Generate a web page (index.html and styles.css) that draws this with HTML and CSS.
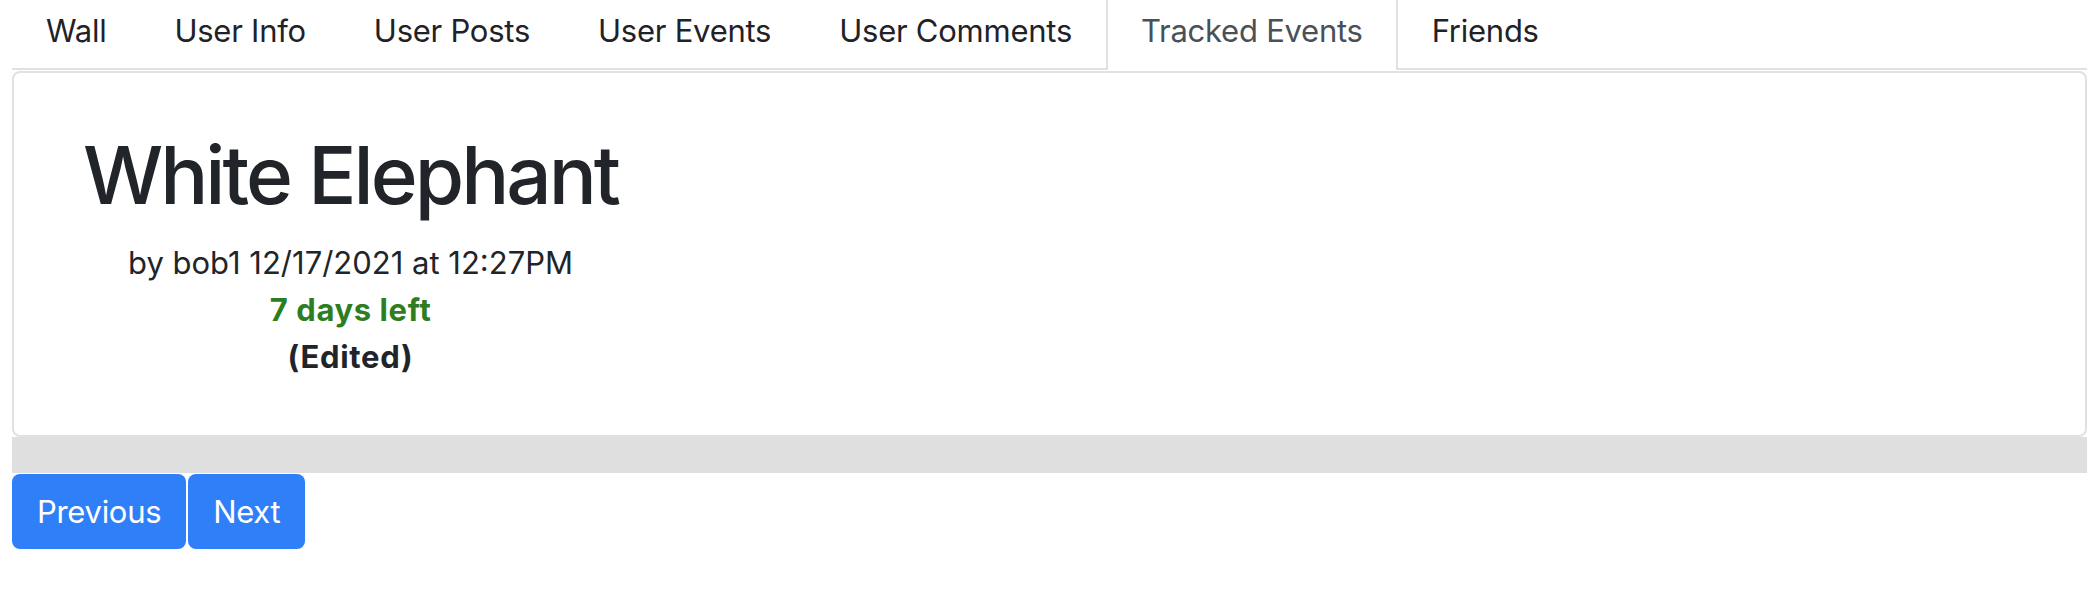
FILE: index.html
```html
<!DOCTYPE html>
<html lang="en">
<head>
<meta charset="utf-8">
<title>Tracked Events</title>
<link rel="stylesheet" href="styles.css">
</head>
<body>
  <ul class="tabs">
    <li class="tab">Wall</li>
    <li class="tab">User Info</li>
    <li class="tab">User Posts</li>
    <li class="tab">User Events</li>
    <li class="tab">User Comments</li>
    <li class="tab active">Tracked Events</li>
    <li class="tab">Friends</li>
  </ul>
  <div class="card">
    <div class="event">
      <h1 class="title">White Elephant</h1>
      <div class="meta">by bob1 12/17/2021 at 12:27PM</div>
      <div class="left">7 days left</div>
      <div class="edited">(Edited)</div>
    </div>
  </div>
  <div class="bar"></div>
  <div class="pager">
    <button class="btn">Previous</button>
    <button class="btn">Next</button>
  </div>
</body>
</html>
```
FILE: styles.css
```css
html, body {
  margin: 0;
  padding: 0;
  background: #fff;
}
body {
  margin: 0 11px 0 12px;
  font-family: Inter, "Liberation Sans", sans-serif;
  color: #212529;
}
.tabs {
  list-style: none;
  margin: 0;
  padding: 0;
  display: flex;
  border-bottom: 2px solid #dee2e6;
  height: 70px;
  box-sizing: border-box;
}
.tab {
  font-size: 31px;
  letter-spacing: -0.25px;
  line-height: 50px;
  padding: 6px 33px 12px;
  border-left: 1px solid transparent;
  border-right: 1px solid transparent;
  color: #1f2226;
  white-space: nowrap;
}
.tab.active {
  color: #495057;
  background: #fff;
  border-left: 2px solid #dee2e6;
  border-right: 2px solid #dee2e6;
  margin-bottom: -2px;
}
.card {
  margin-top: 1px;
  border: 2px solid #dfe1e3;
  border-radius: 8px;
  padding: 53px 0 52px 69px;
  height: 366px;
  box-sizing: border-box;
}
.event {
  width: fit-content;
  text-align: center;
}
.title {
  margin: 0 0 15px;
  font-size: 80px;
  letter-spacing: -3px;
  line-height: 98px;
  font-weight: 500;
  color: #212529;
}
.meta, .left, .edited {
  font-size: 31px;
  line-height: 47px;
}
.left {
  color: #2f7d22;
  font-weight: 700;
  letter-spacing: 0.6px;
}
.edited {
  font-weight: 700;
  letter-spacing: 0.7px;
}
.bar {
  height: 36px;
  background: #dfdfdf;
}
.pager {
  display: flex;
  gap: 2px;
  margin-top: 1px;
}
.btn {
  font-family: Inter, "Liberation Sans", sans-serif;
  font-size: 31px;
  letter-spacing: -0.3px;
  line-height: 49px;
  padding: 13px 25px;
  border: 0;
  border-radius: 8px;
  background: #2f80f8;
  color: #fff;
}
```
